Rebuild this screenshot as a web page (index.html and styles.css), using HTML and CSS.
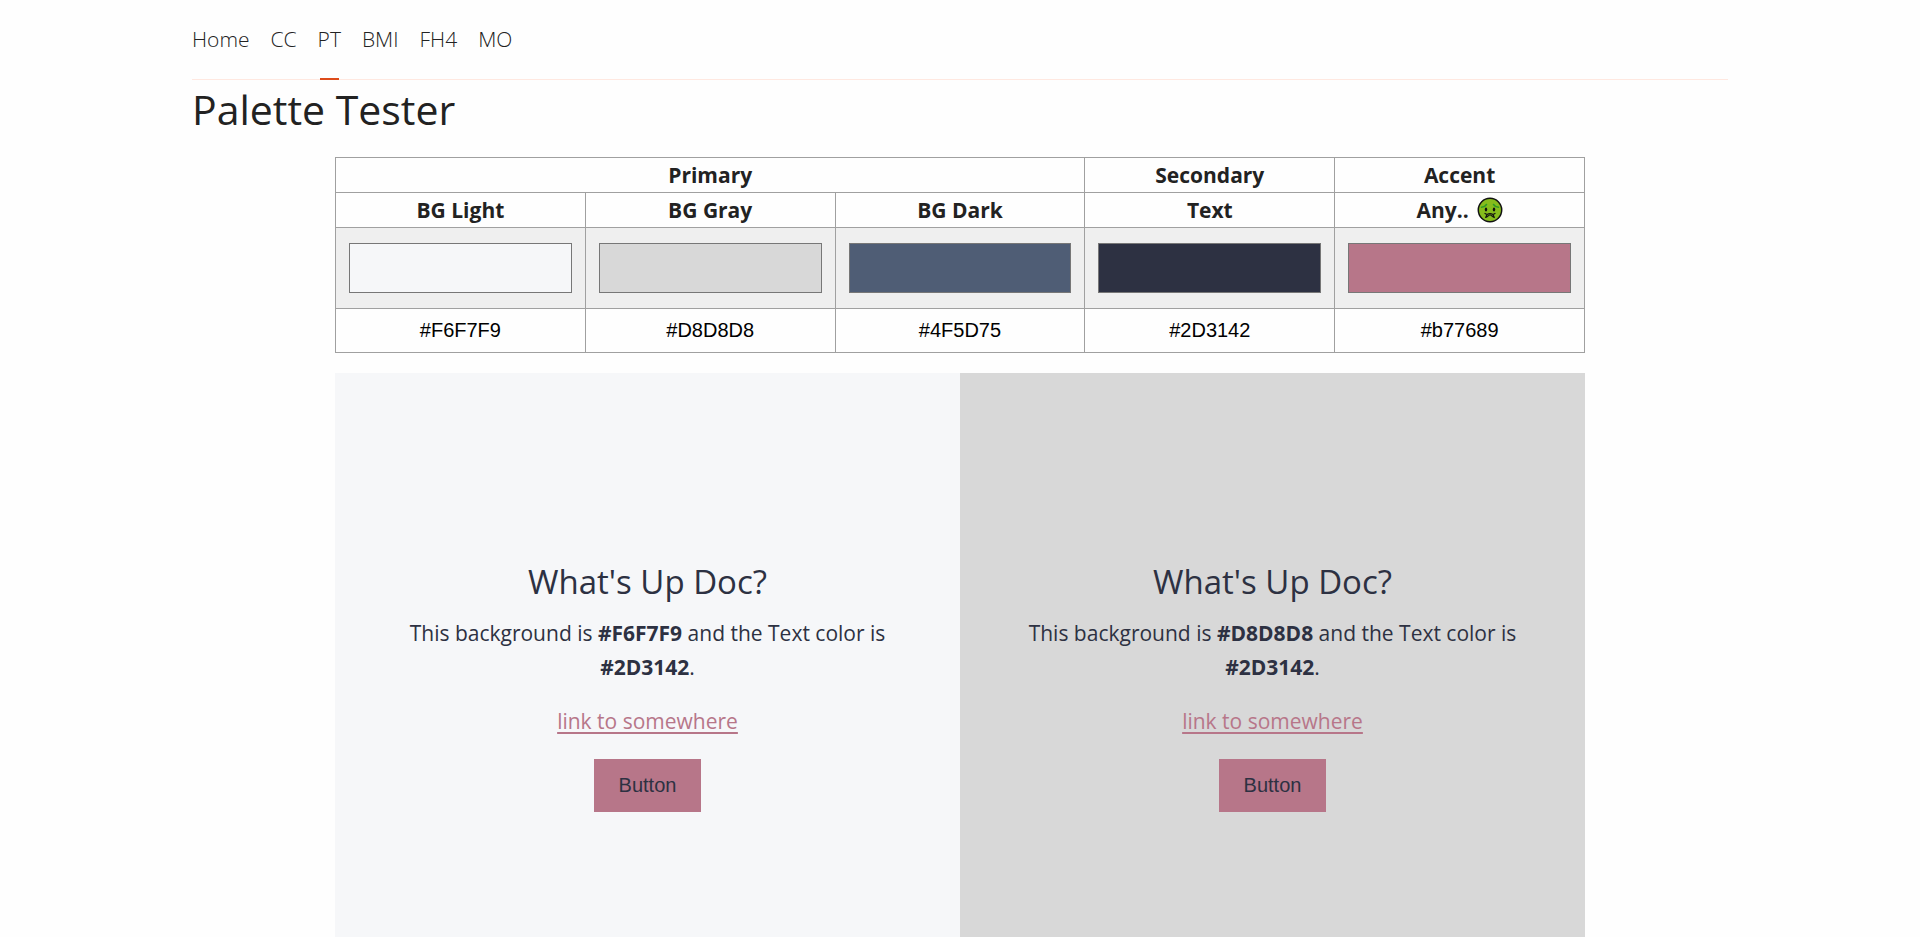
FILE: index.html
```html
<!DOCTYPE html>
<html lang="en">
<head>
<meta charset="utf-8">
<title>Palette Tester</title>
<link rel="stylesheet" href="styles.css">
</head>
<body>
<div class="page">
  <nav class="nav">
    <a class="nav-link" href="#home">Home</a>
    <a class="nav-link" href="#cc">CC</a>
    <a class="nav-link active" href="#pt" aria-current="page">PT</a>
    <a class="nav-link" href="#bmi">BMI</a>
    <a class="nav-link" href="#fh4">FH4</a>
    <a class="nav-link" href="#mo">MO</a>
  </nav>
  <main>
    <h1 class="title">Palette Tester</h1>
    <div class="tester">
      <table class="palette">
        <thead>
          <tr><th colspan="3">Primary</th><th>Secondary</th><th>Accent</th></tr>
          <tr>
            <th>BG Light</th><th>BG Gray</th><th>BG Dark</th><th>Text</th>
            <th><span class="any">Any..
              <svg class="face" viewBox="0 0 26 26" aria-hidden="true">
                <circle cx="13" cy="13" r="11.7" fill="#86bc1c" stroke="#111" stroke-width="1.5"/>
                <path d="M4.5 10.2Q8 10 9.5 7.500M21.500 10.200Q18 10 16.500 7.500" fill="none" stroke="#2f9a25" stroke-width="1.5" stroke-linecap="round"/>
                <ellipse cx="9" cy="12.500" rx="1.200" ry="2" fill="#111"/>
                <ellipse cx="17" cy="12.500" rx="1.200" ry="2" fill="#111"/>
                <path d="M8 16.500L10 17.500L8.700 20.500L10.500 19.500Q13 16.500 15.500 19.500L17.300 20.500L16 17.500L18 16.500M10 17.500Q13 15.800 16 17.500" fill="none" stroke="#111" stroke-width="1.200" stroke-linecap="round" stroke-linejoin="round"/>
              </svg></span></th>
          </tr>
        </thead>
        <tbody>
          <tr>
            <td><input class="picker" type="color" value="#f6f7f9" aria-label="BG Light color"></td>
            <td><input class="picker" type="color" value="#d8d8d8" aria-label="BG Gray color"></td>
            <td><input class="picker" type="color" value="#4f5d75" aria-label="BG Dark color"></td>
            <td><input class="picker" type="color" value="#2d3142" aria-label="Text color"></td>
            <td><input class="picker" type="color" value="#b77689" aria-label="Accent color"></td>
          </tr>
          <tr>
            <td><input class="hex" type="text" value="#F6F7F9" aria-label="BG Light hex"></td>
            <td><input class="hex" type="text" value="#D8D8D8" aria-label="BG Gray hex"></td>
            <td><input class="hex" type="text" value="#4F5D75" aria-label="BG Dark hex"></td>
            <td><input class="hex" type="text" value="#2D3142" aria-label="Text hex"></td>
            <td><input class="hex" type="text" value="#b77689" aria-label="Accent hex"></td>
          </tr>
        </tbody>
      </table>
      <div class="panels">
        <section class="panel light">
          <h2 class="heading">What's Up Doc?</h2>
          <p class="text">This background is <b>#F6F7F9</b> and the Text color is <b>#2D3142</b>.</p>
          <a class="link" href="#somewhere">link to somewhere</a>
          <button class="button" type="button">Button</button>
        </section>
        <section class="panel gray">
          <h2 class="heading">What's Up Doc?</h2>
          <p class="text">This background is <b>#D8D8D8</b> and the Text color is <b>#2D3142</b>.</p>
          <a class="link" href="#somewhere">link to somewhere</a>
          <button class="button" type="button">Button</button>
        </section>
      </div>
    </div>
  </main>
</div>
</body>
</html>
```
FILE: styles.css
```css
* { box-sizing: border-box; }
body {
  margin: 0;
  background: #fefefe;
  color: #222;
  font-family: "Segoe UI", "Open Sans", "Noto Sans", sans-serif;
  font-size: 21px;
  line-height: 34px;
}
.page { width: 80%; margin: 0 auto; }
.nav {
  display: flex;
  gap: 21px;
  height: 80px;
  border-bottom: 1px solid #ffe8e0;
}
.nav-link {
  position: relative;
  padding-top: 22px;
  color: #222;
  font-weight: 300;
  text-decoration: none;
}
.nav-link.active::after {
  content: "";
  position: absolute;
  left: 2px;
  right: 2px;
  bottom: -1px;
  height: 2px;
  background: #dd4b1a;
}
.title {
  margin: 0;
  padding: 0 0 19px;
  font-size: 41px;
  font-weight: 400;
  line-height: 58px;
}
.tester { max-width: 1250px; margin: 0 auto; }
.palette {
  width: 100%;
  table-layout: fixed;
  border-collapse: collapse;
}
.palette th, .palette td { padding: 0; border: 1px solid #a0a0a0; }
.palette th { font-weight: 700; text-align: center; }
.any { display: flex; justify-content: center; align-items: center; gap: 8px; }
.face { width: 26px; height: 26px; }
.picker {
  appearance: none;
  display: block;
  width: 100%;
  height: 80px;
  padding: 15px 13px;
  border: 0;
  background: #efefef;
}
.picker::-webkit-color-swatch-wrapper { padding: 0; }
.picker::-webkit-color-swatch { border: 1px solid #777; border-radius: 0; }
.hex {
  display: block;
  width: 100%;
  height: 43px;
  padding: 0;
  border: 0;
  background: transparent;
  color: #000;
  font: 20px "Liberation Sans", Arial, sans-serif;
  text-align: center;
}
.panels {
  display: grid;
  grid-template-columns: 1fr 1fr;
  margin-top: 20px;
}
.panel {
  display: flex;
  flex-direction: column;
  align-items: center;
  justify-content: center;
  aspect-ratio: 1;
  padding: 0 60px;
  color: #2d3142;
  text-align: center;
}
.light { background: #f6f7f9; }
.gray { background: #d8d8d8; }
.heading { margin: 0 0 12px; font-size: 33px; font-weight: 400; line-height: 44px; }
.text { margin: 0 0 20px; }
.link { margin-bottom: 21px; color: #b77689; text-underline-offset: 3px; }
.button {
  padding: 15px 25px;
  border: 0;
  background: #b77689;
  color: #2d3142;
  font: 20px "Liberation Sans", Arial, sans-serif;
}
```
